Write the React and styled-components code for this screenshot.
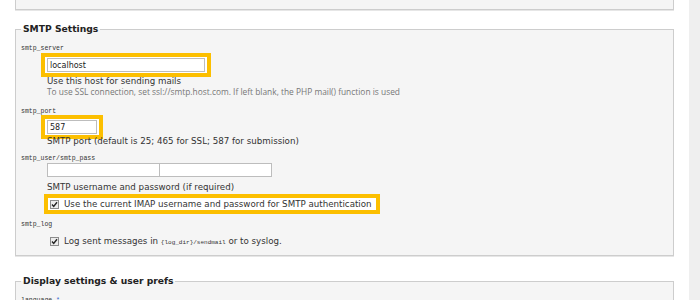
import React from 'react'
import styled, { createGlobalStyle } from 'styled-components'

const GlobalStyle = createGlobalStyle`
  html, body {
    margin: 0;
    padding: 0;
    background: #fff;
    overflow: hidden;
  }
`

const Check = () => (
  <CheckBox>
    <svg width="9" height="9" viewBox="0 0 9 9">
      <rect x="0.5" y="0.5" width="8" height="8" fill="#ececec" stroke="#8c8c8c" />
      <path d="M2 4.6 L3.7 6.4 L7 2.2" fill="none" stroke="#222" strokeWidth="1.4" />
    </svg>
  </CheckBox>
)

const App = () => (
  <Page>
    <GlobalStyle />
    <Main>
      <PrevPanel />
      <Fieldset>
        <Legend>SMTP Settings</Legend>

        <Label $top={10}>smtp_server</Label>
        <Field>
          <Highlight>
            <TextInput $width={158} defaultValue="localhost" />
          </Highlight>
          <Desc $top={-1}>Use this host for sending mails</Desc>
          <Hint>To use SSL connection, set ssl://smtp.host.com. If left blank, the PHP mail() function is used</Hint>
        </Field>

        <Label $top={11}>smtp_port</Label>
        <Field>
          <Highlight $top={-1}>
            <TextInput $width={50} defaultValue="587" />
          </Highlight>
          <Desc $top={-3}>SMTP port (default is 25; 465 for SSL; 587 for submission)</Desc>
        </Field>

        <Label $top={8}>smtp_user/smtp_pass</Label>
        <Field>
          <InputPair>
            <TextInput $width={113} />
            <TextInput $width={113} />
          </InputPair>
          <Desc $top={5}>SMTP username and password (if required)</Desc>
          <CheckRow $marked>
            <Check />
            <span>Use the current IMAP username and password for SMTP authentication</span>
          </CheckRow>
        </Field>

        <Label $top={7}>smtp_log</Label>
        <Field>
          <CheckRow>
            <Check />
            <span>
              Log sent messages in <Code>{'{log_dir}'}/sendmail</Code> or to syslog.
            </span>
          </CheckRow>
        </Field>
      </Fieldset>

      <Fieldset>
        <Legend>Display settings &amp; user prefs</Legend>
        <Label $top={10}>language <Required>*</Required></Label>
        <Field>
          <TextInput $width={158} />
        </Field>
      </Fieldset>
    </Main>
    <Strip />
  </Page>
)

export default App

const Page = styled.div`
  display: flex;
  width: 700px;
  height: 300px;
  overflow: hidden;
  font-family: "DejaVu Sans", Verdana, sans-serif;
  color: #333;
`

const Main = styled.div`
  width: 659px;
  padding: 0 15px 0 15px;
`

const Strip = styled.div`
  width: 11px;
  background: #efefef;
`

const PrevPanel = styled.div`
  height: 9px;
  background: #f5f5f5;
  border: 1px solid #cdcdcd;
  border-top: none;
  box-shadow: 0 1px 0 #e6e6e6;
`

const Fieldset = styled.fieldset`
  margin: 13px 0 0;
  padding: 0 0 8px 5px;
  min-width: 0;
  background: #f5f5f5;
  border: 1px solid #cdcdcd;
  box-shadow: 0 1px 0 #e6e6e6;
  & + & {
    margin-top: 19px;
  }
`

const Legend = styled.legend`
  padding: 0 2px;
  font-size: 9.2px;
  line-height: 12px;
  font-weight: bold;
  color: #222;
`

const Label = styled.div`
  margin-top: ${p => p.$top ?? 8}px;
  font-family: "Liberation Mono", monospace;
  font-size: 6.5px;
  line-height: 8px;
  color: #333;
`

const Required = styled.span`
  color: #36c;
`

const Field = styled.div`
  margin-left: 26px;
`

const Highlight = styled.div`
  display: inline-block;
  vertical-align: top;
  margin: ${p => p.$top ?? 0}px 0 0 -6px;
  padding: 1px 2px;
  background: #fff;
  border: 4px solid #fcbf00;
`

const TextInput = styled.input`
  display: block;
  box-sizing: border-box;
  width: ${p => p.$width}px;
  height: 14px;
  margin: 0;
  padding: 0 2px;
  background: #fff;
  border: 1px solid #bdbdbd;
  font-family: "DejaVu Sans", Verdana, sans-serif;
  font-size: 8px;
  color: #222;
  outline: none;
`

const InputPair = styled.div`
  display: flex;
  & > input + input {
    margin-left: -1px;
  }
`

const Desc = styled.div`
  margin-top: ${p => p.$top ?? 0}px;
  font-size: 8.7px;
  line-height: 11px;
  color: #333;
`

const Hint = styled.div`
  font-family: "Open Sans", sans-serif;
  font-size: 8.4px;
  line-height: 10px;
  color: #777;
`

const CheckRow = styled.div`
  display: ${p => (p.$marked ? 'inline-flex' : 'flex')};
  align-items: center;
  gap: 5px;
  margin-top: ${p => (p.$marked ? 1 : 6)}px;
  margin-left: ${p => (p.$marked ? -3 : 0)}px;
  padding: ${p => (p.$marked ? '0 4px 0 2px' : '0 0 0 3px')};
  height: 12px;
  background: ${p => (p.$marked ? '#fff' : 'transparent')};
  border: ${p => (p.$marked ? '4px solid #fcbf00' : 'none')};
  font-size: 8.7px;
  color: #333;
`

const CheckBox = styled.span`
  display: flex;
  width: 9px;
  height: 9px;
`

const Code = styled.code`
  font-family: "Liberation Mono", monospace;
  font-size: 6px;
  color: #333;
`
